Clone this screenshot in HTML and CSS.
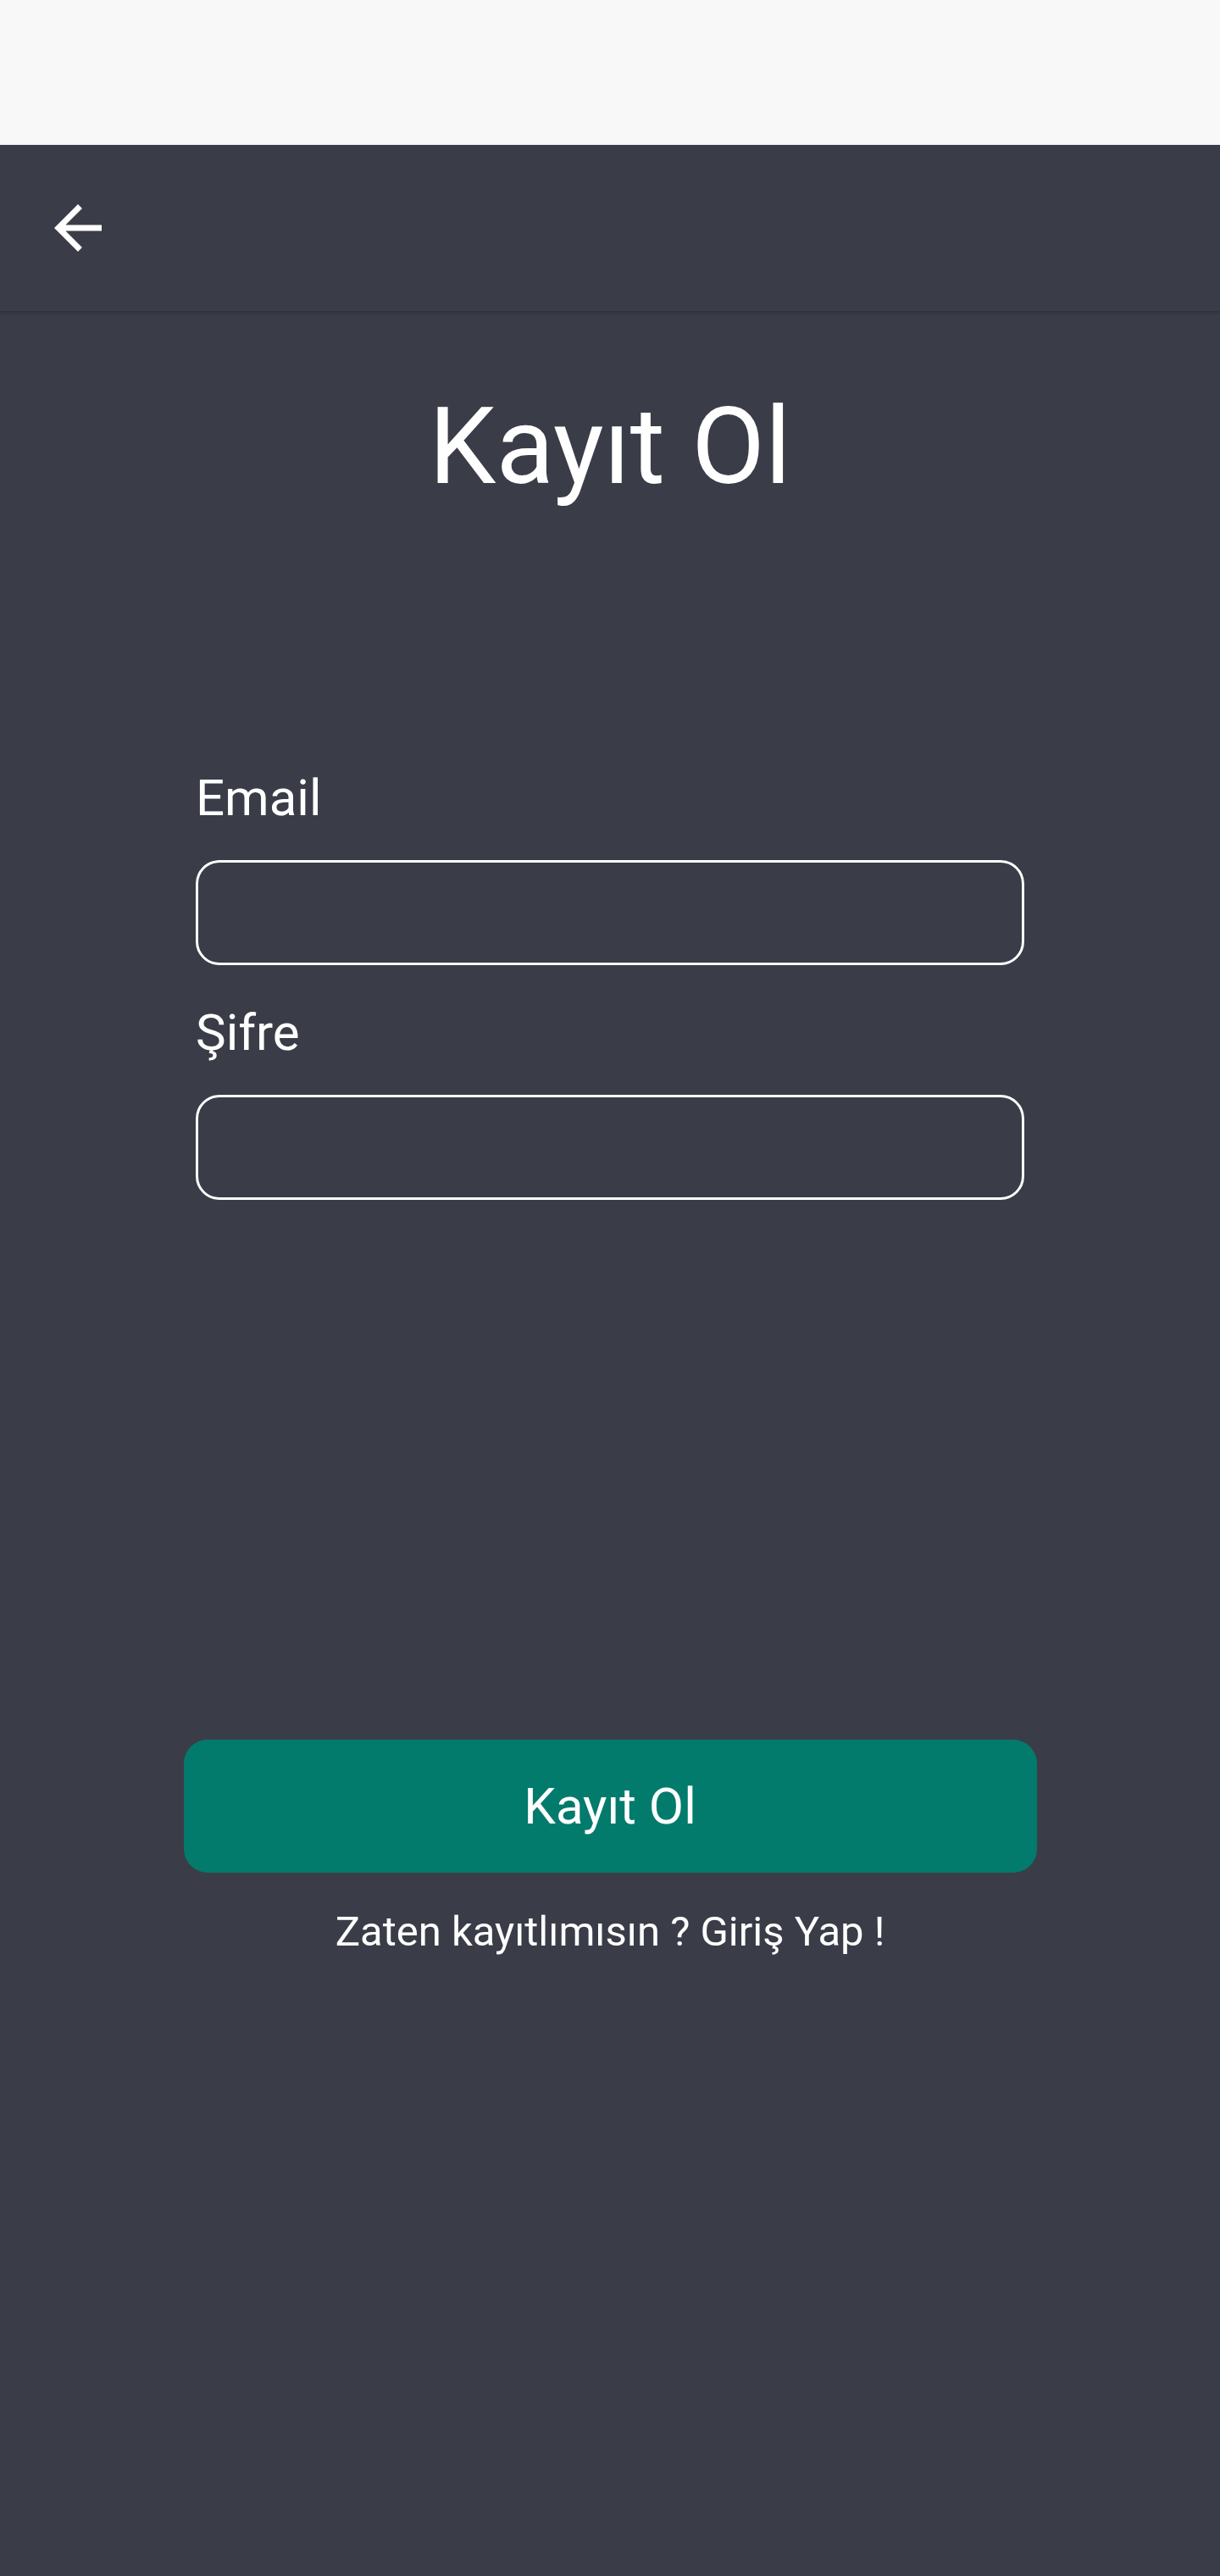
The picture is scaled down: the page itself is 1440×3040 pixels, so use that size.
FILE: index.html
```html
<!DOCTYPE html>
<html lang="tr">
<head>
<meta charset="utf-8">
<title>Kayıt Ol</title>
<link rel="stylesheet" href="styles.css">
</head>
<body>
<div class="status-bar"></div>
<header class="app-bar">
  <button class="back" aria-label="Geri">
    <svg width="84" height="84" viewBox="0 0 24 24" fill="#ffffff">
      <path d="M20 11H7.83l5.59-5.59L12 4l-8 8 8 8 1.41-1.41L7.83 13H20v-2z"/>
    </svg>
  </button>
</header>
<main class="content">
  <h1 class="title">Kayıt Ol</h1>
  <form class="form">
    <label class="label" for="email">Email</label>
    <input class="field" id="email" type="email">
    <label class="label label-second" for="pass">Şifre</label>
    <input class="field" id="pass" type="password">
  </form>
  <button class="submit" type="button">Kayıt Ol</button>
  <p class="footer-link">Zaten kayıtlımısın ? Giriş Yap !</p>
</main>
</body>
</html>
```
FILE: styles.css
```css
html, body {
  margin: 0;
  padding: 0;
}
body {
  background: #3a3d47;
  min-height: 3040px;
  font-family: Roboto, "Noto Sans", "Liberation Sans", sans-serif;
  color: #ffffff;
}
.status-bar {
  height: 171px;
  background: #f8f8f8;
}
.app-bar {
  height: 196px;
  background: #3a3d47;
  display: flex;
  align-items: center;
  box-shadow: 0 2px 4px rgba(0, 0, 0, 0.22);
  position: relative;
}
.back {
  margin-left: 50px;
  width: 84px;
  height: 84px;
  padding: 0;
  border: 0;
  background: transparent;
  display: flex;
}
.content {
  display: flex;
  flex-direction: column;
  align-items: center;
}
.title {
  margin: 97px 0 0;
  font-size: 126px;
  line-height: 126px;
  font-weight: 400;
}
.form {
  width: 978px;
  display: flex;
  flex-direction: column;
  margin-top: 322px;
}
.label {
  font-size: 60px;
  line-height: 60px;
  height: 60px;
}
.label-second {
  margin-top: 50px;
}
.field {
  box-sizing: border-box;
  margin-top: 43px;
  height: 124px;
  width: 100%;
  border: 3px solid #ffffff;
  border-radius: 28px;
  background: transparent;
  color: #ffffff;
  font: inherit;
  font-size: 56px;
  padding: 0 30px;
  outline: none;
}
.submit {
  margin-top: 637px;
  width: 1007px;
  height: 157px;
  border: 0;
  border-radius: 28px;
  background: #027b6d;
  color: #ffffff;
  font-family: inherit;
  font-size: 60px;
  font-weight: 400;
  padding: 0;
}
.footer-link {
  margin: 45px 0 0;
  font-size: 49px;
  line-height: 49px;
}
```
